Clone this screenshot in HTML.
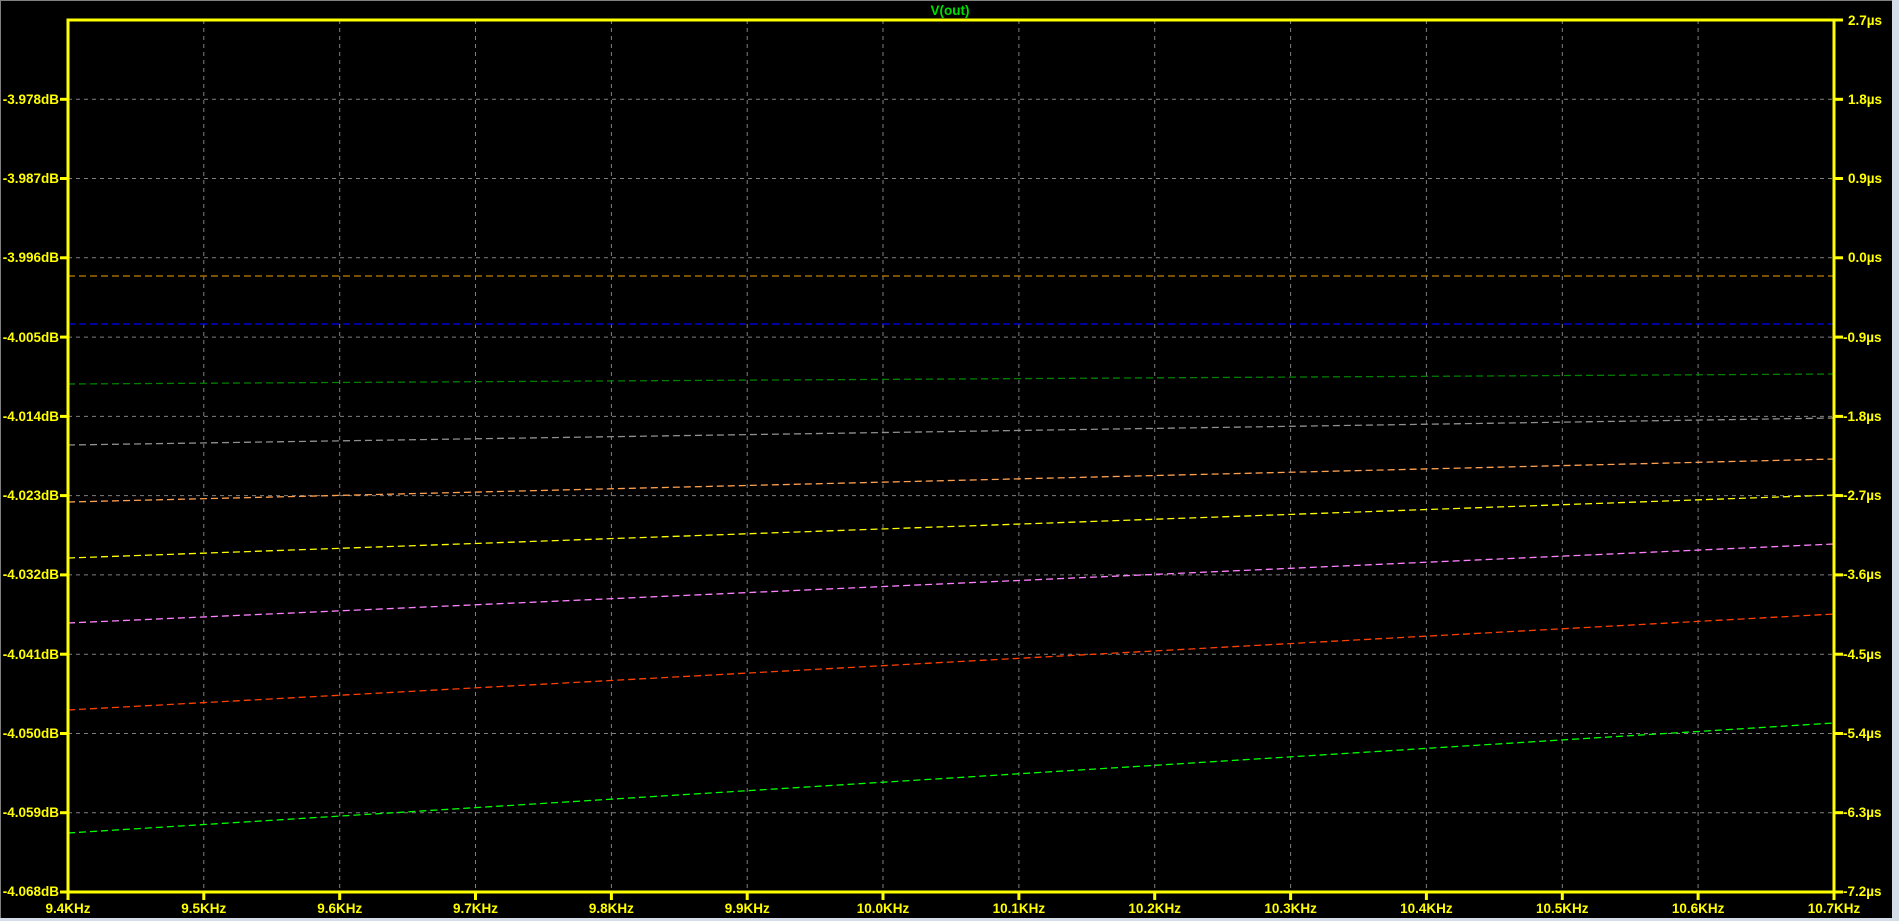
<!DOCTYPE html>
<html><head><meta charset="utf-8"><style>
html,body{margin:0;padding:0;background:#000;width:1899px;height:921px;overflow:hidden}
svg{display:block}
text{font-family:"Liberation Sans",sans-serif;font-weight:bold;font-size:13.5px;fill:#ffff00}
</style></head><body>
<svg width="1899" height="921" xmlns="http://www.w3.org/2000/svg">
<rect x="0" y="0" width="1899" height="921" fill="#000"/>
<rect x="1892" y="0" width="7" height="921" fill="#d4dce8"/>
<rect x="0" y="918" width="1899" height="3" fill="#d4dce8"/>
<line x1="0" y1="0.5" x2="1892" y2="0.5" stroke="#808080"/>
<line x1="0.5" y1="0" x2="0.5" y2="918" stroke="#808080"/>
<g stroke="#808080" stroke-width="1" stroke-dasharray="4 4">
<line x1="203.8" y1="20" x2="203.8" y2="892"/><line x1="339.7" y1="20" x2="339.7" y2="892"/><line x1="475.5" y1="20" x2="475.5" y2="892"/><line x1="611.4" y1="20" x2="611.4" y2="892"/><line x1="747.2" y1="20" x2="747.2" y2="892"/><line x1="883" y1="20" x2="883" y2="892"/><line x1="1018.9" y1="20" x2="1018.9" y2="892"/><line x1="1154.7" y1="20" x2="1154.7" y2="892"/><line x1="1290.6" y1="20" x2="1290.6" y2="892"/><line x1="1426.4" y1="20" x2="1426.4" y2="892"/><line x1="1562.3" y1="20" x2="1562.3" y2="892"/><line x1="1698.1" y1="20" x2="1698.1" y2="892"/>
<line x1="68" y1="99.3" x2="1834" y2="99.3"/><line x1="68" y1="178.5" x2="1834" y2="178.5"/><line x1="68" y1="257.8" x2="1834" y2="257.8"/><line x1="68" y1="337.1" x2="1834" y2="337.1"/><line x1="68" y1="416.4" x2="1834" y2="416.4"/><line x1="68" y1="495.6" x2="1834" y2="495.6"/><line x1="68" y1="574.9" x2="1834" y2="574.9"/><line x1="68" y1="654.2" x2="1834" y2="654.2"/><line x1="68" y1="733.5" x2="1834" y2="733.5"/><line x1="68" y1="812.7" x2="1834" y2="812.7"/>
</g>
<g stroke-width="1.3" stroke-dasharray="7 4" fill="none">
<line x1="68" y1="276" x2="1834" y2="276" stroke="#c08000"/>
<line x1="68" y1="324" x2="1834" y2="324" stroke="#0000ff"/>
<line x1="68" y1="384" x2="1834" y2="374" stroke="#008000"/>
<line x1="68" y1="445" x2="1834" y2="418" stroke="#909090"/>
<line x1="68" y1="502" x2="1834" y2="459" stroke="#ffa050"/>
<line x1="68" y1="558" x2="1834" y2="495" stroke="#ffff00"/>
<line x1="68" y1="623" x2="1834" y2="544" stroke="#ff80ff"/>
<line x1="68" y1="710" x2="1834" y2="614" stroke="#ff4000"/>
<line x1="68" y1="833" x2="1834" y2="723" stroke="#00ff00"/>
</g>
<rect x="68" y="20" width="1766" height="872" fill="none" stroke="#ffff00" stroke-width="3"/>
<g stroke="#ffff00" stroke-width="3">
<line x1="60" y1="99.3" x2="68" y2="99.3"/><line x1="60" y1="178.5" x2="68" y2="178.5"/><line x1="60" y1="257.8" x2="68" y2="257.8"/><line x1="60" y1="337.1" x2="68" y2="337.1"/><line x1="60" y1="416.4" x2="68" y2="416.4"/><line x1="60" y1="495.6" x2="68" y2="495.6"/><line x1="60" y1="574.9" x2="68" y2="574.9"/><line x1="60" y1="654.2" x2="68" y2="654.2"/><line x1="60" y1="733.5" x2="68" y2="733.5"/><line x1="60" y1="812.7" x2="68" y2="812.7"/><line x1="60" y1="892" x2="68" y2="892"/>
<line x1="1834" y1="20" x2="1843" y2="20"/><line x1="1834" y1="99.3" x2="1843" y2="99.3"/><line x1="1834" y1="178.5" x2="1843" y2="178.5"/><line x1="1834" y1="257.8" x2="1843" y2="257.8"/><line x1="1834" y1="337.1" x2="1843" y2="337.1"/><line x1="1834" y1="416.4" x2="1843" y2="416.4"/><line x1="1834" y1="495.6" x2="1843" y2="495.6"/><line x1="1834" y1="574.9" x2="1843" y2="574.9"/><line x1="1834" y1="654.2" x2="1843" y2="654.2"/><line x1="1834" y1="733.5" x2="1843" y2="733.5"/><line x1="1834" y1="812.7" x2="1843" y2="812.7"/><line x1="1834" y1="892" x2="1843" y2="892"/>
<line x1="68" y1="892" x2="68" y2="900"/><line x1="203.8" y1="892" x2="203.8" y2="900"/><line x1="339.7" y1="892" x2="339.7" y2="900"/><line x1="475.5" y1="892" x2="475.5" y2="900"/><line x1="611.4" y1="892" x2="611.4" y2="900"/><line x1="747.2" y1="892" x2="747.2" y2="900"/><line x1="883" y1="892" x2="883" y2="900"/><line x1="1018.9" y1="892" x2="1018.9" y2="900"/><line x1="1154.7" y1="892" x2="1154.7" y2="900"/><line x1="1290.6" y1="892" x2="1290.6" y2="900"/><line x1="1426.4" y1="892" x2="1426.4" y2="900"/><line x1="1562.3" y1="892" x2="1562.3" y2="900"/><line x1="1698.1" y1="892" x2="1698.1" y2="900"/><line x1="1834" y1="892" x2="1834" y2="900"/>
</g>
<text x="950" y="15" text-anchor="middle" style="fill:#00e000">V(out)</text>
<g text-anchor="end">
<text x="59" y="104">-3.978dB</text><text x="59" y="183">-3.987dB</text><text x="59" y="262">-3.996dB</text><text x="59" y="342">-4.005dB</text><text x="59" y="421">-4.014dB</text><text x="59" y="500">-4.023dB</text><text x="59" y="579">-4.032dB</text><text x="59" y="659">-4.041dB</text><text x="59" y="738">-4.050dB</text><text x="59" y="817">-4.059dB</text><text x="59" y="896">-4.068dB</text>
</g>
<g>
<text x="1848" y="25">2.7µs</text><text x="1848" y="104">1.8µs</text><text x="1848" y="183">0.9µs</text><text x="1848" y="262">0.0µs</text><text x="1843" y="342">-0.9µs</text><text x="1843" y="421">-1.8µs</text><text x="1843" y="500">-2.7µs</text><text x="1843" y="579">-3.6µs</text><text x="1843" y="659">-4.5µs</text><text x="1843" y="738">-5.4µs</text><text x="1843" y="817">-6.3µs</text><text x="1843" y="896">-7.2µs</text>
</g>
<g text-anchor="middle">
<text x="68" y="913">9.4KHz</text><text x="203.8" y="913">9.5KHz</text><text x="339.7" y="913">9.6KHz</text><text x="475.5" y="913">9.7KHz</text><text x="611.4" y="913">9.8KHz</text><text x="747.2" y="913">9.9KHz</text><text x="883" y="913">10.0KHz</text><text x="1018.9" y="913">10.1KHz</text><text x="1154.7" y="913">10.2KHz</text><text x="1290.6" y="913">10.3KHz</text><text x="1426.4" y="913">10.4KHz</text><text x="1562.3" y="913">10.5KHz</text><text x="1698.1" y="913">10.6KHz</text><text x="1834" y="913">10.7KHz</text>
</g>
</svg>
</body></html>
